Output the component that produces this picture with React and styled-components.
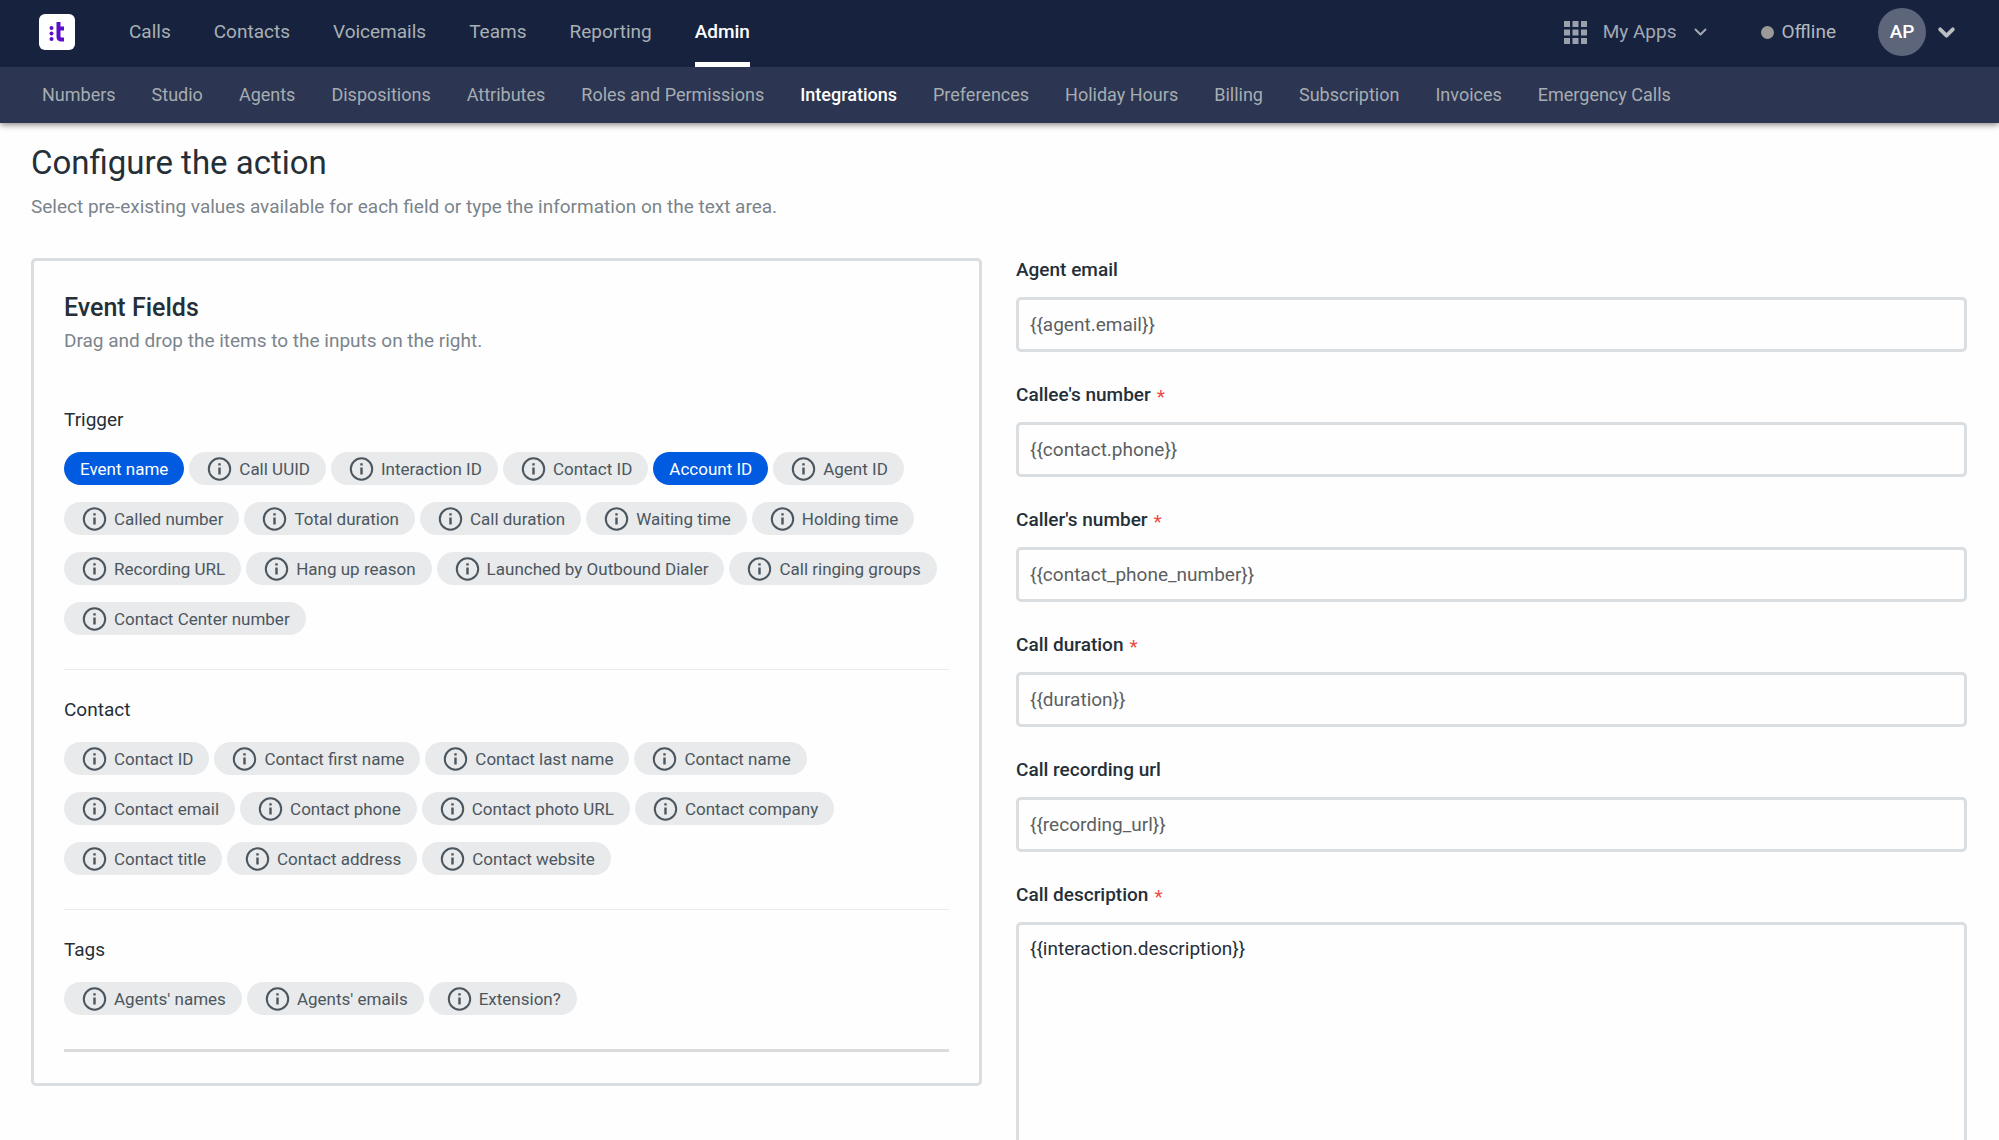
import React from "react";
import styled, { createGlobalStyle, css } from "styled-components";

const GlobalStyle = createGlobalStyle`
  *, *::before, *::after { box-sizing: border-box; }
  body {
    margin: 0;
    background: #fefefe;
    color: #252f38;
    font-family: Roboto, "Liberation Sans", sans-serif;
    font-size: 19px;
    line-height: 24px;
  }
  button, input, textarea { font: inherit; }
`;

const Header = styled.header`
  position: relative;
  box-shadow: 0 2px 6px rgba(0, 0, 0, 0.45);
`;

const TopBar = styled.div`
  display: flex;
  align-items: stretch;
  height: 67px;
  padding: 0 43px 0 39px;
  background: #17223f;
`;

const LogoLink = styled.a`
  display: flex;
  align-items: center;
  margin-right: 54px;
  padding-bottom: 3px;
`;

const TopNav = styled.nav`
  display: flex;
  gap: 43px;
`;

const TopLink = styled.a`
  display: flex;
  align-items: center;
  padding-top: 2px;
  border-bottom: 5px solid transparent;
  color: #a9b0b3;
  text-decoration: none;
  ${(p) =>
    p.$active &&
    css`
      color: #ffffff;
      font-weight: 500;
      border-bottom-color: #ffffff;
    `}
`;

const TopActions = styled.div`
  display: flex;
  align-items: center;
  margin-left: auto;
  padding-bottom: 3px;
`;

const BarButton = styled.button`
  display: flex;
  align-items: center;
  gap: ${(p) => p.$gap}px;
  margin: 0 0 0 ${(p) => p.$space || 0}px;
  padding: 0;
  border: 0;
  background: none;
  color: ${(p) => p.$color};
`;

const StatusDot = styled.span`
  width: 13px;
  height: 13px;
  border-radius: 50%;
  background: #9b9a98;
`;

const Avatar = styled.span`
  display: flex;
  align-items: center;
  justify-content: center;
  width: 48px;
  height: 48px;
  border-radius: 50%;
  background: #5d657b;
  color: #ffffff;
  font-weight: 500;
`;

const SubNav = styled.nav`
  display: flex;
  align-items: center;
  gap: 36px;
  height: 56px;
  padding: 0 42px;
  background: #2c3551;
`;

const SubLink = styled.a`
  color: ${(p) => (p.$active ? "#ffffff" : "#a6adb1")};
  font-size: 18px;
  font-weight: ${(p) => (p.$active ? 500 : 400)};
  text-decoration: none;
  white-space: nowrap;
`;

const Main = styled.main`
  padding: 20px 32px 0 31px;
`;

const Title = styled.h1`
  margin: 0;
  font-size: 33px;
  font-weight: 400;
  line-height: 40px;
`;

const Muted = styled.p`
  margin: ${(p) => p.$space}px 0 0;
  color: #7b848b;
`;

const Columns = styled.div`
  display: grid;
  grid-template-columns: 1fr 1fr;
  align-items: start;
  gap: 34px;
  margin-top: 39px;
`;

const Card = styled.section`
  padding: 31px 30px;
  border: 3px solid #dadee1;
  border-radius: 5px;
`;

const CardTitle = styled.h2`
  margin: 0;
  font-size: 25px;
  font-weight: 500;
  line-height: 32px;
`;

const Groups = styled.div`
  margin-top: 27px;
`;

const Group = styled.section`
  padding: 28px 0 34px;
  border-bottom: ${(p) => (p.$last ? "3px solid #d9dbdc" : "1px solid #e8eaeb")};
`;

const GroupTitle = styled.h3`
  margin: 0 0 20px;
  font-size: 19px;
  font-weight: 400;
  line-height: 24px;
`;

const Chips = styled.ul`
  display: flex;
  flex-wrap: wrap;
  gap: 17px 5px;
  margin: 0;
  padding: 0;
  list-style: none;
`;

const Chip = styled.button`
  display: flex;
  align-items: center;
  gap: 7px;
  height: 33px;
  margin: 0;
  padding: 0 16px;
  border: 0;
  border-radius: 17px;
  background: ${(p) => (p.$active ? "#005be0" : "#e8eaeb")};
  color: ${(p) => (p.$active ? "#ffffff" : "#4c565f")};
  font-size: 17px;
  white-space: nowrap;
`;

const Form = styled.form`
  display: grid;
  gap: 31px;
`;

const Field = styled.div`
  display: grid;
`;

const Label = styled.label`
  display: flex;
  gap: 6px;
  margin-bottom: 15px;
  font-weight: 500;
`;

const Required = styled.span`
  padding-top: 4px;
  color: #ee4a3f;
  font-weight: 400;
  line-height: 20px;
`;

const control = css`
  width: 100%;
  margin: 0;
  border: 3px solid #dadee1;
  border-radius: 5px;
  background: #fefefe;
  outline: none;
`;

const TextInput = styled.input`
  ${control}
  height: 55px;
  padding: 0 11px;
  color: #5c5f61;
`;

const TextArea = styled.textarea`
  ${control}
  display: block;
  height: 260px;
  padding: 12px 11px;
  color: #252f38;
  resize: none;
`;

const Logo = () => (
  <svg width="36" height="36" viewBox="0 0 36 36" aria-hidden="true">
    <rect width="36" height="36" rx="6" fill="#fff" />
    <g fill="#5b0fc9">
      <circle cx="12.500" cy="14" r="2" />
      <circle cx="12.500" cy="19.500" r="2" />
      <circle cx="12.500" cy="25" r="2" />
    </g>
    <path d="M19.500 8v14.500q0 3 3 3h2.500M18.500 14.500H25" fill="none" stroke="#5b0fc9" strokeWidth="4" />
  </svg>
);

const GridIcon = () => (
  <svg width="23" height="23" viewBox="0 0 23 23" fill="#9ba0ad" aria-hidden="true">
    {[0, 8.5, 17].map((y) =>
      [0, 8.5, 17].map((x) => <rect key={`${x}-${y}`} x={x} y={y} width="6" height="6" />)
    )}
  </svg>
);

const Chevron = ({ width, height, stroke }) => (
  <svg width={width} height={height} viewBox="0 0 18 12" fill="none" stroke="currentColor" strokeWidth={stroke} strokeLinecap="round" strokeLinejoin="round" aria-hidden="true">
    <path d="M3 3l6 6 6-6" />
  </svg>
);

const InfoIcon = () => (
  <svg width="27" height="24" viewBox="0 0 27 24" fill="none" stroke="#4c565f" aria-hidden="true">
    <circle cx="14.500" cy="12" r="10.700" strokeWidth="2" />
    <path d="M14.500 10.500V17.500M14.500 6.200V8.600" strokeWidth="2.400" />
  </svg>
);

const topLinks = ["Calls", "Contacts", "Voicemails", "Teams", "Reporting", "Admin"];

const subLinks = [
  "Numbers", "Studio", "Agents", "Dispositions", "Attributes", "Roles and Permissions", "Integrations",
  "Preferences", "Holiday Hours", "Billing", "Subscription", "Invoices", "Emergency Calls",
];

const groups = [
  {
    title: "Trigger",
    items: [
      "Event name", "Call UUID", "Interaction ID", "Contact ID", "Account ID", "Agent ID",
      "Called number", "Total duration", "Call duration", "Waiting time", "Holding time",
      "Recording URL", "Hang up reason", "Launched by Outbound Dialer", "Call ringing groups",
      "Contact Center number",
    ],
  },
  {
    title: "Contact",
    items: [
      "Contact ID", "Contact first name", "Contact last name", "Contact name",
      "Contact email", "Contact phone", "Contact photo URL", "Contact company",
      "Contact title", "Contact address", "Contact website",
    ],
  },
  { title: "Tags", items: ["Agents' names", "Agents' emails", "Extension?"] },
];

const highlighted = ["Event name", "Account ID"];

const fields = [
  { id: "agent-email", label: "Agent email", value: "{{agent.email}}" },
  { id: "callee", label: "Callee's number", value: "{{contact.phone}}", required: true },
  { id: "caller", label: "Caller's number", value: "{{contact_phone_number}}", required: true },
  { id: "duration", label: "Call duration", value: "{{duration}}", required: true },
  { id: "recording", label: "Call recording url", value: "{{recording_url}}" },
  { id: "description", label: "Call description", value: "{{interaction.description}}", required: true, multiline: true },
];

export default function App() {
  return (
    <>
      <GlobalStyle />
      <Header>
        <TopBar>
          <LogoLink href="#home" aria-label="Home"><Logo /></LogoLink>
          <TopNav aria-label="Main">
            {topLinks.map((name) => (
              <TopLink key={name} href="#top" $active={name === "Admin"}>{name}</TopLink>
            ))}
          </TopNav>
          <TopActions>
            <BarButton type="button" $gap={16} $color="#a3a8b3">
              <GridIcon />
              My Apps
              <Chevron width={15} height={10} stroke={2.4} />
            </BarButton>
            <BarButton type="button" $gap={8} $space={53} $color="#b3b9be">
              <StatusDot />
              Offline
            </BarButton>
            <BarButton type="button" $gap={11} $space={42} $color="#b9bfc1">
              <Avatar>AP</Avatar>
              <Chevron width={19} height={13} stroke={3.6} />
            </BarButton>
          </TopActions>
        </TopBar>
        <SubNav aria-label="Admin">
          {subLinks.map((name) => (
            <SubLink key={name} href="#admin" $active={name === "Integrations"}>{name}</SubLink>
          ))}
        </SubNav>
      </Header>
      <Main>
        <Title>Configure the action</Title>
        <Muted $space={12}>Select pre-existing values available for each field or type the information on the text area.</Muted>
        <Columns>
          <Card>
            <CardTitle>Event Fields</CardTitle>
            <Muted $space={5}>Drag and drop the items to the inputs on the right.</Muted>
            <Groups>
              {groups.map((group, i) => (
                <Group key={group.title} $last={i === groups.length - 1}>
                  <GroupTitle>{group.title}</GroupTitle>
                  <Chips>
                    {group.items.map((item) => {
                      const active = highlighted.includes(item);
                      return (
                        <li key={item}>
                          <Chip type="button" draggable $active={active}>
                            {!active && <InfoIcon />}
                            {item}
                          </Chip>
                        </li>
                      );
                    })}
                  </Chips>
                </Group>
              ))}
            </Groups>
          </Card>
          <Form>
            {fields.map((f) => (
              <Field key={f.id}>
                <Label htmlFor={f.id}>
                  {f.label}
                  {f.required && <Required>*</Required>}
                </Label>
                {f.multiline ? (
                  <TextArea id={f.id} defaultValue={f.value} />
                ) : (
                  <TextInput id={f.id} type="text" defaultValue={f.value} />
                )}
              </Field>
            ))}
          </Form>
        </Columns>
      </Main>
    </>
  );
}
